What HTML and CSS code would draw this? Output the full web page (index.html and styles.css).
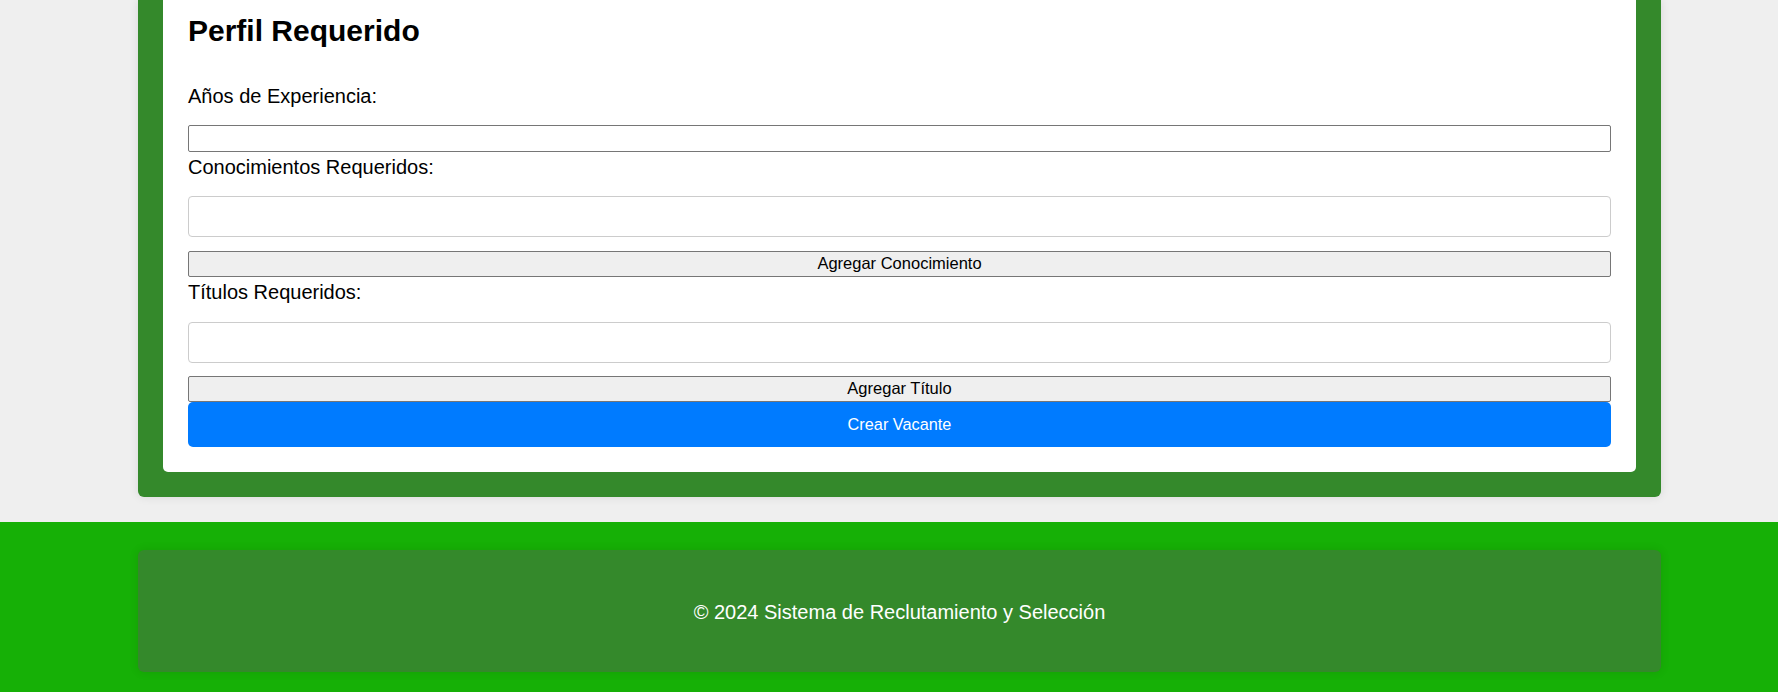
FILE: index.html
```html
<!DOCTYPE html>
<html lang="es">
<head>
<meta charset="utf-8">
<title>Crear Vacante</title>
<link rel="stylesheet" href="styles.css">
</head>
<body>
<main class="container">
  <section class="card">
    <h2 class="card-title">Perfil Requerido</h2>
    <label class="field-label" for="exp">Años de Experiencia:</label>
    <input class="plain-input" id="exp" type="text">
    <label class="field-label tight" for="con">Conocimientos Requeridos:</label>
    <input class="soft-input" id="con" type="text">
    <button class="add-btn first" type="button">Agregar Conocimiento</button>
    <label class="field-label tight last" for="tit">Títulos Requeridos:</label>
    <input class="soft-input" id="tit" type="text">
    <button class="add-btn" type="button">Agregar Título</button>
    <button class="submit-btn" type="submit">Crear Vacante</button>
  </section>
</main>
<footer class="site-footer">
  <div class="footer-box">
    <p class="footer-text">© 2024 Sistema de Reclutamiento y Selección</p>
  </div>
</footer>
</body>
</html>
```

FILE: styles.css
```css
* {
  box-sizing: border-box;
}

html, body {
  margin: 0;
  padding: 0;
}

body {
  background: #efefef;
  font-family: "Liberation Sans", Arial, sans-serif;
  color: #000;
}

.container {
  width: 1523px;
  margin: 0 117px 0 138px;
  background: #34892b;
  padding: 0 25px 25px;
  border-radius: 0 0 6px 6px;
  box-shadow: 0 0 10px rgba(0, 0, 0, 0.1);
}

.card {
  background: #ffffff;
  padding: 14px 25px 25px;
  border-radius: 0 0 5px 5px;
  display: flex;
  flex-direction: column;
}

.card-title {
  margin: 0;
  font-size: 30px;
  line-height: 34px;
  font-weight: bold;
}

.field-label {
  display: block;
  font-size: 20px;
  line-height: 23px;
  margin: 37px 0 17px;
}

.field-label.tight {
  margin-top: 4px;
}

.field-label.last {
  margin-bottom: 18px;
}

.plain-input {
  display: block;
  width: 100%;
  height: 27px;
  border: 1px solid #767676;
  border-radius: 2px;
  background: #fff;
  margin: 0;
}

.soft-input {
  display: block;
  width: 100%;
  height: 41px;
  border: 1px solid #cccccc;
  border-radius: 4px;
  background: #fff;
  margin: 0;
}

.add-btn {
  display: block;
  width: 100%;
  height: 26px;
  margin: 13px 0 0;
  padding: 0 0 2px;
  background: #efefef;
  border: 1px solid #767676;
  border-radius: 2px;
  font-family: "Liberation Sans", Arial, sans-serif;
  font-size: 16.5px;
  line-height: 1;
  color: #000;
}

.add-btn.first {
  margin-top: 14px;
}

.submit-btn {
  display: block;
  width: 100%;
  height: 45px;
  margin: 0;
  padding: 0;
  background: #007bff;
  border: none;
  border-radius: 5px;
  color: #fff;
  font-family: "Liberation Sans", Arial, sans-serif;
  font-size: 16.3px;
}

.site-footer {
  margin-top: 25px;
  background: #16b006;
  padding: 28px 0 28px;
}

.footer-box {
  width: 1523px;
  margin: 0 117px 0 138px;
  height: 122px;
  background: #34892b;
  border-radius: 6px;
  box-shadow: 0 0 10px rgba(0, 0, 0, 0.1);
  display: flex;
  align-items: center;
  justify-content: center;
}

.footer-text {
  margin: 0;
  padding-top: 2px;
  color: #fff;
  font-size: 20px;
  line-height: 23px;
}
```
